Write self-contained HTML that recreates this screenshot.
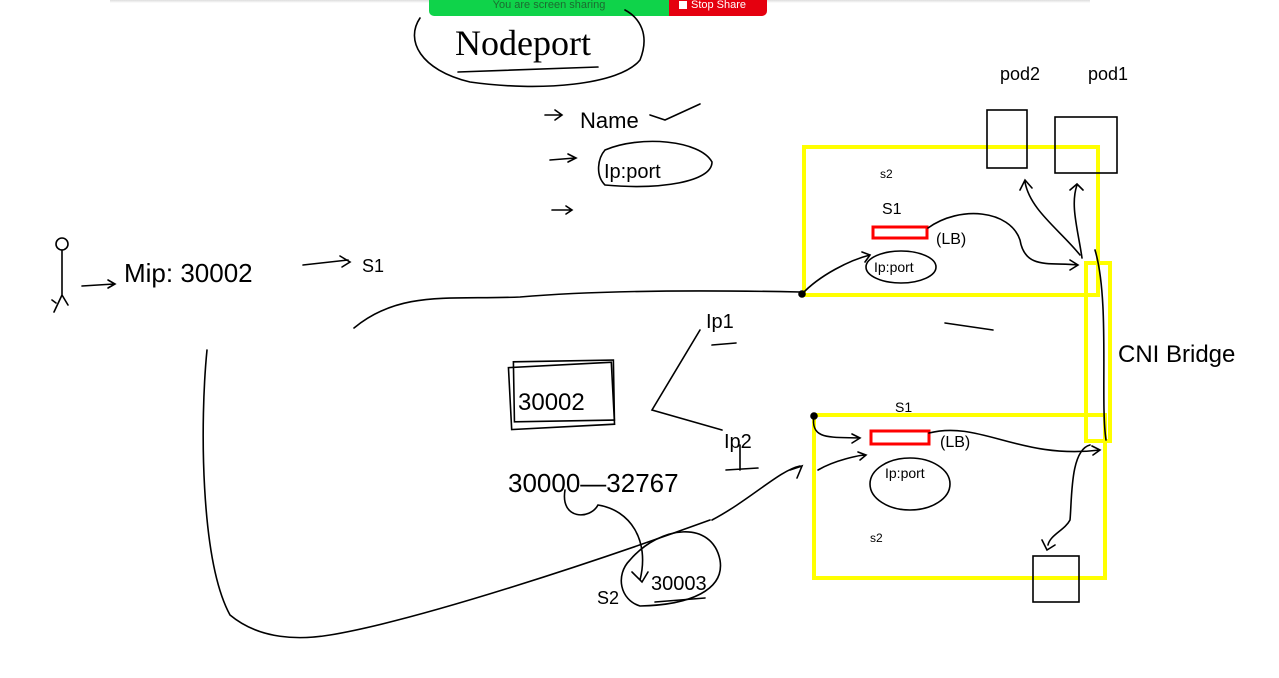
<!DOCTYPE html>
<html><head><meta charset="utf-8"><style>
html,body{margin:0;padding:0;background:#fff;width:1279px;height:678px;overflow:hidden;font-family:"Liberation Sans",sans-serif}
svg{position:absolute;left:0;top:0}
.bar{position:absolute;top:0;height:16px;font-size:11px;line-height:11px;}
</style></head><body>
<div style="position:absolute;left:110px;top:0;width:980px;height:3px;background:linear-gradient(#ddd,#fff)"></div>
<div class="bar" style="left:429px;width:240px;background:#0fd34a;color:#1c6b30;border-radius:0 0 0 5px;text-align:center;">You are screen sharing</div>
<div class="bar" style="left:669px;width:98px;background:#e5000f;color:#fff;border-radius:0 0 5px 0;"><span style="display:inline-block;width:8px;height:8px;background:#fff;margin:0 4px 0 10px;vertical-align:-1px"></span>Stop Share</div>
<svg width="1279" height="678" viewBox="0 0 1279 678" fill="none" stroke="#000" stroke-width="1.6" stroke-linecap="round" font-family="Liberation Sans, sans-serif">
<!-- yellow boxes -->
<rect x="804" y="147" width="294" height="148" stroke="#ffff00" stroke-width="4"/>
<rect x="814" y="415" width="291" height="163" stroke="#ffff00" stroke-width="4"/>
<rect x="1086" y="263" width="24" height="178" stroke="#ffff00" stroke-width="4"/>
<!-- red -->
<rect x="873" y="227" width="54" height="11" stroke="#f00" stroke-width="3"/>
<rect x="871" y="431" width="58" height="13" stroke="#f00" stroke-width="3"/>
<!-- Nodeport ellipse -->
<path d="M420 18 C405 40 420 70 470 82 C540 92 620 85 640 60 C650 35 640 18 625 10"/>
<text x="455" y="55" font-size="36" fill="#000" stroke="none" font-family="Liberation Serif">Nodeport</text>
<path d="M458 72 L598 67"/>
<text x="580" y="128" font-size="22" fill="#000" stroke="none">Name</text>
<path d="M545 115 L562 115 M555 110 L562 115 L555 120"/>
<path d="M550 160 L575 158 M568 154 L576 158 L568 162"/>
<path d="M552 210 L572 210 M566 206 L572 210 L566 214"/>
<path d="M650 115 L665 120 L700 104"/>
<path d="M605 150 C640 135 700 140 712 162 C712 182 660 190 605 185 C595 175 598 158 605 150"/>
<text x="604" y="178" font-size="20" fill="#000" stroke="none">Ip:port</text>
<!-- pods -->
<text x="1000" y="80" font-size="18" fill="#000" stroke="none">pod2</text>
<text x="1088" y="80" font-size="18" fill="#000" stroke="none">pod1</text>
<rect x="987" y="110" width="40" height="58"/>
<rect x="1055" y="117" width="62" height="56"/>
<rect x="1033" y="556" width="46" height="46"/>
<!-- person -->
<circle cx="62" cy="244" r="6"/>
<path d="M62 250 L62 295 M62 295 L54 312 M62 295 L68 305 M52 300 L56 303"/>
<path d="M82 286 L114 284 M108 280 L115 284 L108 288"/>
<text x="124" y="282" font-size="26" fill="#000" stroke="none">Mip: 30002</text>
<path d="M303 265 L348 260 M340 256 L350 262 L342 267"/>
<text x="362" y="272" font-size="18" fill="#000" stroke="none">S1</text>
<!-- curves -->
<path d="M354 328 C400 290 450 300 520 297 C600 290 700 290 800 292"/>
<circle cx="802" cy="294" r="3" fill="#000"/>
<path d="M207 350 C200 420 200 560 230 615 C260 640 300 640 330 635 C420 620 600 560 710 520"/>
<path d="M712 520 C750 500 780 470 800 466 M790 470 L802 466 L797 478"/>
<path d="M802 294 C820 275 850 260 870 255 M862 252 L870 255 L865 262"/>
<text x="880" y="178" font-size="12" fill="#000" stroke="none">s2</text>
<text x="882" y="214" font-size="16" fill="#000" stroke="none">S1</text>
<text x="936" y="244" font-size="16" fill="#000" stroke="none">(LB)</text>
<ellipse cx="901" cy="267" rx="35" ry="16"/>
<text x="874" y="272" font-size="14" fill="#000" stroke="none">Ip:port</text>
<path d="M928 228 C960 205 1010 210 1020 240 C1025 270 1050 262 1078 265 M1070 260 L1078 265 L1070 270"/>
<path d="M1080 255 C1060 230 1030 210 1025 182 M1020 190 L1025 180 L1032 188"/>
<path d="M1082 258 C1078 230 1070 205 1077 185 M1070 190 L1077 184 L1083 190"/>
<path d="M945 323 L993 330"/>
<text x="1118" y="362" font-size="24" fill="#000" stroke="none">CNI Bridge</text>
<path d="M1095 250 C1110 300 1100 400 1106 440"/>
<!-- Ip labels -->
<text x="706" y="328" font-size="20" fill="#000" stroke="none">Ip1</text>
<path d="M712 345 L736 343"/>
<path d="M700 330 L652 410 L722 430"/>
<text x="724" y="448" font-size="20" fill="#000" stroke="none">Ip2</text>
<path d="M726 470 L758 468 M740 445 L740 470"/>
<rect x="510" y="365" width="103" height="62" transform="rotate(-3 560 396)"/>
<rect x="514" y="361" width="100" height="60" transform="rotate(-1 560 396)"/>
<text x="518" y="410" font-size="24" fill="#000" stroke="none">30002</text>
<text x="508" y="492" font-size="26" fill="#000" stroke="none">30000—32767</text>
<path d="M565 490 C560 520 590 520 598 505 C630 510 650 540 640 580 M632 572 L642 582 L648 572"/>
<path d="M630 560 C660 525 712 520 720 560 C725 590 690 605 640 606 C620 600 615 575 630 560"/>
<text x="651" y="590" font-size="20" fill="#000" stroke="none">30003</text>
<path d="M655 602 L705 598"/>
<text x="597" y="604" font-size="18" fill="#000" stroke="none">S2</text>
<!-- bottom box -->
<circle cx="814" cy="416" r="3" fill="#000"/>
<path d="M814 416 C810 440 830 437 860 438 M852 434 L860 438 L852 443"/>
<text x="895" y="412" font-size="14" fill="#000" stroke="none">S1</text>
<text x="940" y="447" font-size="16" fill="#000" stroke="none">(LB)</text>
<ellipse cx="910" cy="484" rx="40" ry="26"/>
<text x="885" y="478" font-size="14" fill="#000" stroke="none">Ip:port</text>
<path d="M818 470 C835 460 860 455 866 455 M858 452 L866 455 L860 460"/>
<text x="870" y="542" font-size="12" fill="#000" stroke="none">s2</text>
<path d="M929 433 C980 420 1020 460 1100 450 M1092 446 L1100 450 L1093 455"/>
<path d="M1090 445 C1070 450 1072 500 1070 520 C1065 530 1050 535 1048 545 M1042 540 L1047 550 L1055 545"/>
</svg>
</body></html>
